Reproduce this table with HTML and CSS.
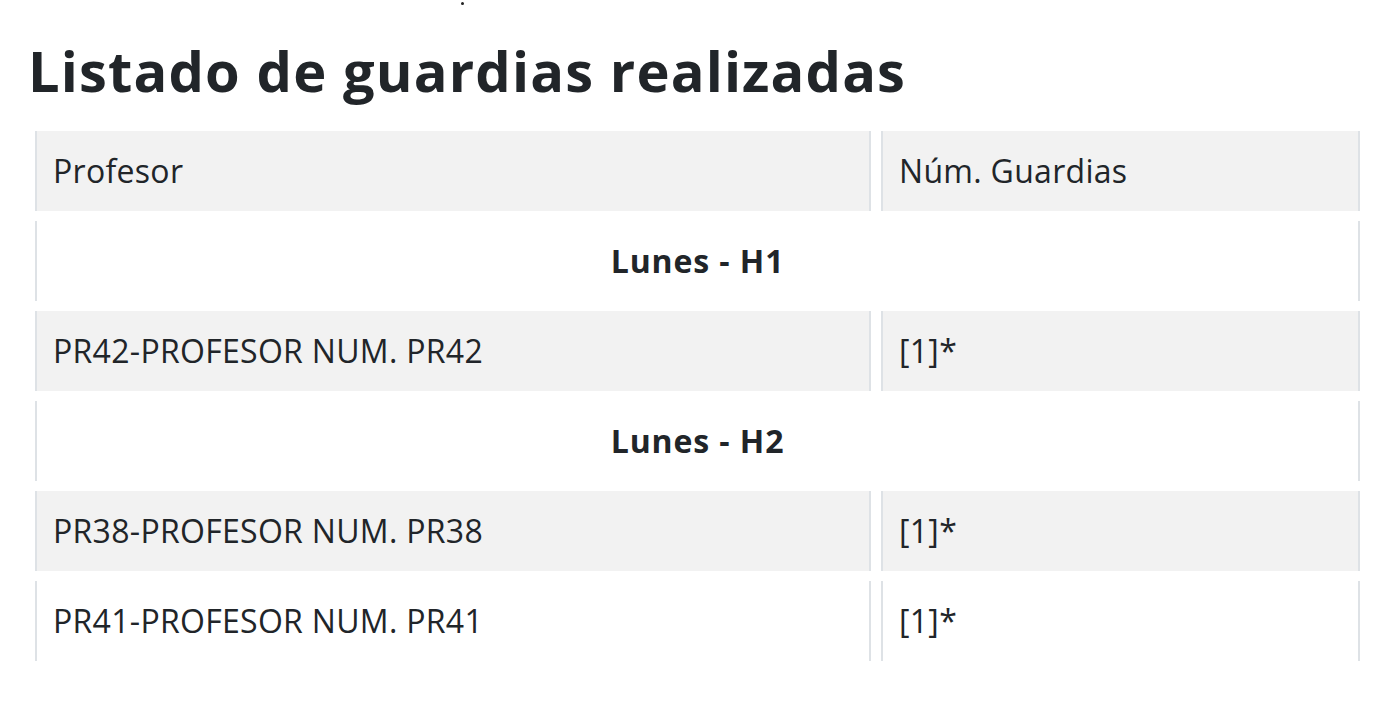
FILE: index.html
```html
<!DOCTYPE html>
<html lang="es">
<head>
<meta charset="utf-8">
<title>Listado de guardias realizadas</title>
<link rel="stylesheet" href="styles.css">
</head>
<body>
<div class="topmark"><span class="dot"></span></div>
<div class="page">
  <h1 class="title">Listado de guardias realizadas</h1>
  <table class="guardias">
    <thead>
      <tr class="shade">
        <th class="col-prof">Profesor</th>
        <th class="col-num">Núm. Guardias</th>
      </tr>
    </thead>
    <tbody>
      <tr><td class="group" colspan="2">Lunes - H1</td></tr>
      <tr class="shade"><td>PR42-PROFESOR NUM. PR42</td><td>[1]*</td></tr>
      <tr><td class="group" colspan="2">Lunes - H2</td></tr>
      <tr class="shade"><td>PR38-PROFESOR NUM. PR38</td><td>[1]*</td></tr>
      <tr><td>PR41-PROFESOR NUM. PR41</td><td>[1]*</td></tr>
    </tbody>
  </table>
</div>
</body>
</html>
```
FILE: styles.css
```css
html, body {
  margin: 0;
  padding: 0;
  background: #ffffff;
}
body {
  font-family: "Open Sans", "Noto Sans", sans-serif;
  color: #212529;
}
.topmark {
  height: 0;
  padding-left: 461px;
}
.dot {
  display: block;
  width: 3px;
  height: 3px;
  margin-top: 2px;
  background: #222;
  border-radius: 50%;
}
.page {
  padding: 0 22px 40px 25px;
}
.title {
  margin: 0;
  padding: 35px 0 0 3px;
  font-size: 56px;
  font-weight: 700;
  line-height: 1.2;
  letter-spacing: 1.15px;
  color: #212529;
}
.guardias {
  margin-top: 17px;
  width: 1345px;
  border-collapse: separate;
  border-spacing: 10px;
  font-size: 32px;
  line-height: 48px;
  letter-spacing: 0.3px;
}
.guardias th,
.guardias td {
  padding: 16px 16px;
  text-align: left;
  font-weight: 400;
  border-left: 2px solid #dee2e6;
  border-right: 2px solid #dee2e6;
  vertical-align: middle;
}
.col-prof {
  width: 800px;
}
.guardias td.group {
  text-align: center;
  font-weight: 700;
  letter-spacing: 0.9px;
}
.shade th,
.shade td {
  background: #f2f2f2;
}
```
